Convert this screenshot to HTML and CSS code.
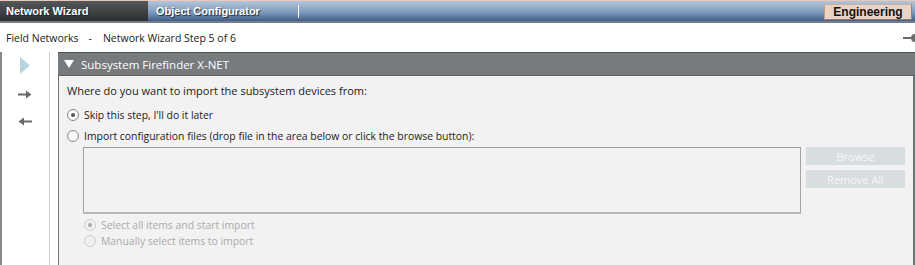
FILE: index.html
```html
<!DOCTYPE html>
<html>
<head>
<meta charset="utf-8">
<link rel="stylesheet" href="styles.css">
</head>
<body>
<div class="app">
  <div class="topbar">
    <div class="tab tab-active">Network Wizard</div>
    <div class="tab tab-blue">Object Configurator</div>
    <div class="sep"></div>
    <div class="spacer"></div>
    <div class="eng">Engineering</div>
  </div>
  <div class="crumbs">
    <span class="crumb">Field Networks</span>
    <span class="dash">-</span>
    <span class="crumb">Network Wizard Step 5 of 6</span>
    <span class="spacer"></span>
    <span class="slider"><span class="slider-line"></span><span class="slider-dot"></span></span>
  </div>
  <div class="main">
    <div class="sidebar">
      <svg class="ic ic-play" width="10" height="17" viewBox="0 0 10 17"><path d="M0 0 L10 8.5 L0 17 Z" fill="#b7d5df"/></svg>
      <svg class="ic ic-next" width="14" height="9" viewBox="0 0 14 9"><path d="M0 3.5 H8 V0.5 L13.5 4.5 L8 8.5 V5.5 H0 Z" fill="#6a6a6a"/></svg>
      <svg class="ic ic-prev" width="14" height="9" viewBox="0 0 14 9"><path d="M14 3.5 H6 V0.5 L0.5 4.5 L6 8.5 V5.5 H14 Z" fill="#6a6a6a"/></svg>
    </div>
    <div class="panel">
      <div class="panel-head">
        <svg class="caret" width="10" height="8" viewBox="0 0 10 8"><path d="M0 0 H10 L5 8 Z" fill="#ffffff"/></svg>
        <span>Subsystem Firefinder X-NET</span>
      </div>
      <div class="panel-body">
        <div class="question">Where do you want to import the subsystem devices from:</div>
        <div class="opt opt-1"><span class="radio checked"></span><span>Skip this step, I'll do it later</span></div>
        <div class="opt opt-2"><span class="radio"></span><span>Import configuration files (drop file in the area below or click the browse button):</span></div>
        <div class="drop-row">
          <div class="dropbox"></div>
          <div class="btns">
            <div class="btn">Browse</div>
            <div class="btn">Remove All</div>
          </div>
        </div>
        <div class="sub">
          <div class="opt opt-d"><span class="radio disabled checked"></span><span>Select all items and start import</span></div>
          <div class="opt opt-d"><span class="radio disabled"></span><span>Manually select items to import</span></div>
        </div>
      </div>
    </div>
  </div>
</div>
</body>
</html>
```
FILE: styles.css
```css
* { box-sizing: border-box; }
html, body { margin: 0; padding: 0; background: #ffffff; }
body { width: 915px; height: 265px; overflow: hidden; font-family: "Open Sans", "Noto Sans", sans-serif; font-size: 11px; color: #1a1a1a; }
.app { display: flex; flex-direction: column; height: 265px; }

.topbar {
  display: flex; align-items: stretch; height: 23px;
  border-top: 1px solid #e9c9b9; border-bottom: 2px solid #7b7b88;
  background: linear-gradient(#b3c6dc, #7f9cbd 55%, #3f5e88);
  font-family: "Liberation Sans", Arial, sans-serif; font-weight: bold; font-size: 11px; color: #fff;
}
.tab { display: flex; align-items: center; text-shadow: 1px 1px 1px #1c2430; }
.tab-active { width: 148px; padding-left: 6px; background: linear-gradient(#545858, #2b2f2f); }
.tab-blue { padding-left: 8px; width: 150px; }
.sep { width: 1px; background: #ffffff; margin: 4px 0 3px 0; }
.spacer { flex: 1; }
.eng {
  display: flex; align-items: center; justify-content: center;
  width: 88px; margin: 3px 3px 1px 0; background: #ebd3c3;
  border: 1px solid #8d8078; border-top-color: #c9b2a5; border-left-color: #b9a092;
  color: #111; text-shadow: none; font-size: 12px;
}

.crumbs { display: flex; align-items: center; height: 29px; padding-left: 6px; font-size: 10.5px; color: #1a1a1a; }
.dash { margin: 0 11px 0 10px; }
.slider { display: flex; align-items: center; margin-right: -4px; }
.slider-line { width: 8px; height: 2px; background: #6a6a6a; }
.slider-dot { width: 8px; height: 8px; border-radius: 50%; background: #6a6a6a; }

.main { display: flex; flex: 1; border-left: 2px solid #8a8a8a; }
.sidebar { width: 48px; border-right: 1px solid #cfcfcf; display: flex; flex-direction: column; align-items: flex-start; padding-left: 16px; }
.ic { display: block; }
.ic-play { margin-top: 5px; margin-left: 2px; }
.ic-next { margin-top: 16px; }
.ic-prev { margin-top: 18px; }

.panel { margin-left: 8px; flex: 1; display: flex; flex-direction: column; border-top: 1px solid #4f5555; }
.panel-head {
  height: 23px; background: #777b7d; border-bottom: 1px solid #5d6163;
  display: flex; align-items: center; padding-left: 6px; color: #fff; font-size: 11.5px;
}
.caret { margin-right: 7px; }
.panel-body { flex: 1; background: #f2f2f2; border-left: 1px solid #6f7373; border-right: 2px solid #6f7373; padding: 5px 0 0 8px; }
.question { height: 20px; line-height: 20px; }
.opt { display: flex; align-items: center; font-size: 10.4px; }
.opt-1 { height: 20px; margin-top: 4px; }
.opt-2 { height: 21px; }
.radio {
  width: 12px; height: 12px; border-radius: 50%; margin-right: 5px; flex: none;
  border: 1px solid #8a8a8a; background: radial-gradient(circle, #ffffff 40%, #e6e6e6);
  display: flex; align-items: center; justify-content: center;
}
.radio.checked::after { content: ""; width: 4px; height: 4px; border-radius: 50%; background: #555; }
.radio.disabled { border-color: #cfcfcf; background: #f0f0f0; }
.radio.disabled.checked::after { background: #a8a8a8; }

.drop-row { display: flex; margin-left: 16px; margin-top: 1px; }
.dropbox { width: 718px; height: 67px; border: 1px solid #a3a3a3; border-top-color: #9a9a9e; border-bottom: 2px solid #b6b6b6; background: #f2f2f2; }
.btns { margin-left: 5px; display: flex; flex-direction: column; gap: 5px; }
.btn { width: 99px; height: 18px; background: #d8dde0; color: #f7f7f7; display: flex; align-items: center; justify-content: center; font-size: 11px; }

.sub { margin-left: 17px; margin-top: 3px; color: #aaaaaa; }
.opt-d { height: 16px; }
```
